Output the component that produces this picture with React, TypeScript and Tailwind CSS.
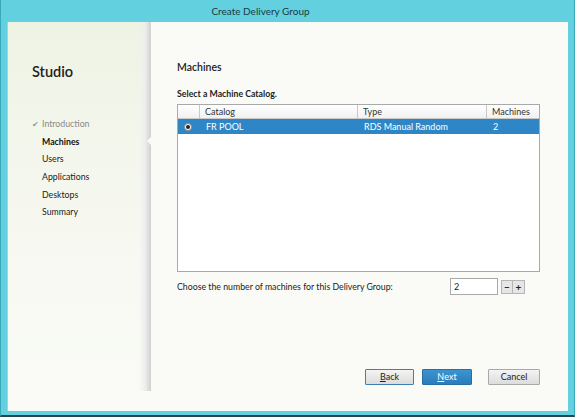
const font = { fontFamily: 'Lato, "Noto Sans", sans-serif' }

const steps = [
  { label: 'Introduction', done: true },
  { label: 'Machines', active: true },
  { label: 'Users' },
  { label: 'Applications' },
  { label: 'Desktops' },
  { label: 'Summary' },
]

const Sidebar = () => (
  <div className="flex w-[143px] bg-gradient-to-b from-[#eef3e4] via-[#f6f8f0] to-[#fafbf7]">
    <div className="flex-1 pl-[24px] pt-[41px]">
      <div className="text-[14.5px] font-semibold leading-[18px] text-[#222]">Studio</div>
      <ul className="mt-[34px] flex flex-col">
        {steps.map((s) => (
          <li key={s.label} className="flex h-[17.6px] items-center text-[8.75px]">
            <span className="w-[10px] text-[8px] text-[#9a9a9a]">{s.done ? '✔' : ''}</span>
            <span
              className={
                s.done ? 'text-[#8a8a8a]' : s.active ? 'font-bold text-[#111]' : 'text-[#222]'
              }
            >
              {s.label}
            </span>
          </li>
        ))}
      </ul>
    </div>
    <div className="mb-[20px] w-[12px] bg-gradient-to-r from-transparent via-[#eeeeee] to-[#cfd1cf]" />
  </div>
)

const Button = ({ children, variant }: { children: React.ReactNode; variant: 'back' | 'next' | 'cancel' }) => {
  const cls =
    variant === 'next'
      ? 'border-[#2a6da3] bg-gradient-to-b from-[#3d94d0] to-[#2a7cbc] text-white'
      : variant === 'back'
        ? 'border-[#3f7fb5] bg-gradient-to-b from-[#f4f4f4] to-[#dcdcdc] text-[#222]'
        : 'border-[#a9a9a9] bg-gradient-to-b from-[#f4f4f4] to-[#dcdcdc] text-[#222]'
  return (
    <button
      type="button"
      className={`flex h-[16px] w-full items-center justify-center rounded-[1px] border text-[9px] ${cls}`}
    >
      {children}
    </button>
  )
}

const MainPanel = () => (
  <div className="relative flex flex-1 flex-col bg-[#fafbf6] pl-[26px] pr-[28px]">
    <div className="absolute left-[-4px] top-[114px] h-0 w-0 border-y-[5px] border-r-[5px] border-y-transparent border-r-[#fafbf6]" />
    <div className="mt-[39px] text-[10.5px] font-semibold leading-[12px] text-[#222]">Machines</div>
    <div className="mt-[15px] text-[8.75px] font-bold leading-[11px] text-[#222]">Select a Machine Catalog.</div>
    <div className="mt-[5px] flex h-[168px] flex-col border border-[#a9a9a9] bg-white">
      <div className="flex h-[14px] border-b border-[#c8c8c8] bg-gradient-to-b from-white to-[#f1f1f1] text-[9px] text-[#333]">
        <div className="w-[22px] border-r border-[#c8c8c8]" />
        <div className="w-[158px] border-r border-[#c8c8c8] pl-[5px] leading-[13px]">Catalog</div>
        <div className="w-[129px] border-r border-[#c8c8c8] pl-[5px] leading-[13px]">Type</div>
        <div className="flex-1 pl-[5px] leading-[13px]">Machines</div>
      </div>
      <div className="flex h-[15px] items-center bg-[#2f86c6] text-[9px] text-white">
        <div className="flex w-[22px] justify-center pr-[2px]">
          <span className="flex h-[8px] w-[8px] items-center justify-center rounded-full border border-[#8a8a8a] bg-white">
            <span className="h-[4px] w-[4px] rounded-full bg-[#222]" />
          </span>
        </div>
        <div className="w-[158px] pl-[6px]">FR POOL</div>
        <div className="w-[129px] pl-[6px]">RDS Manual Random</div>
        <div className="flex-1 pl-[6px]">2</div>
      </div>
    </div>
    <div className="mt-[6px] flex h-[17px] items-center text-[8.75px] text-[#222]">
      <span className="flex-1">Choose the number of machines for this Delivery Group:</span>
      <div className="mr-[15px] flex items-center">
        <div className="flex h-[17px] w-[48px] items-center border border-[#a9a9a9] bg-white pl-[3px] text-[9px]">2</div>
        <div className="ml-[3px] flex h-[14px] w-[12px] items-center justify-center border border-[#b5b5b5] bg-[#e6e6e6] text-[10px] font-bold leading-none">
          −
        </div>
        <div className="flex h-[14px] w-[12px] items-center justify-center border border-l-0 border-[#b5b5b5] bg-[#e6e6e6] text-[10px] font-bold leading-none">
          +
        </div>
      </div>
    </div>
    <div className="mt-[74px] flex justify-end gap-[8px]">
      <div className="w-[49px]">
        <Button variant="back">
          <span className="underline">B</span>ack
        </Button>
      </div>
      <div className="w-[50px]">
        <Button variant="next">
          <span className="underline">N</span>ext
        </Button>
      </div>
      <div className="ml-[8px] w-[52px]">
        <Button variant="cancel">Cancel</Button>
      </div>
    </div>
  </div>
)

export default function App() {
  return (
    <div
      style={font}
      className="flex h-[417px] w-[575px] flex-col border-x border-b-2 border-[#3aa9bb] border-b-[#22474f] bg-[#62d0df]"
    >
      <div className="flex h-[22px] items-center justify-center pr-[54px] text-[10px] text-[#1c3a44]">
        Create Delivery Group
      </div>
      <div className="mx-[6px] mb-[4px] flex flex-1 border-l border-[#9fd6de]">
        <Sidebar />
        <MainPanel />
      </div>
    </div>
  )
}
